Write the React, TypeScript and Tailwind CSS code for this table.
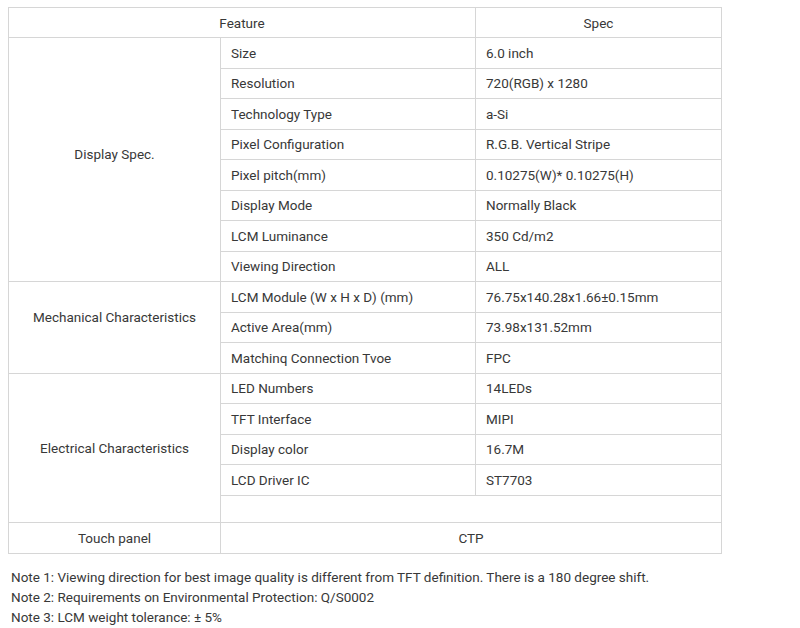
const displayRows = [
  ['Size', '6.0 inch'],
  ['Resolution', '720(RGB) x 1280'],
  ['Technology Type', 'a-Si'],
  ['Pixel Configuration', 'R.G.B. Vertical Stripe'],
  ['Pixel pitch(mm)', '0.10275(W)* 0.10275(H)'],
  ['Display Mode', 'Normally Black'],
  ['LCM Luminance', '350 Cd/m2'],
  ['Viewing Direction', 'ALL'],
];

const mechanicalRows = [
  ['LCM Module (W x H x D) (mm)', '76.75x140.28x1.66±0.15mm'],
  ['Active Area(mm)', '73.98x131.52mm'],
  ['Matchinq Connection Tvoe', 'FPC'],
];

const electricalRows = [
  ['LED Numbers', '14LEDs'],
  ['TFT Interface', 'MIPI'],
  ['Display color', '16.7M'],
  ['LCD Driver IC', 'ST7703'],
];

const cell = 'border border-[#d6d6d6] px-[10px] py-0 text-left font-normal';
const group = 'border border-[#d6d6d6] px-[10px] text-center align-middle font-normal';

function Group({ label, rows, pad, extra }: { label: string; rows: string[][]; pad: string; extra?: boolean }) {
  return (
    <>
      {rows.map((r, i) => (
        <tr key={r[0]} className="h-[30.5px]">
          {i === 0 && (
            <td rowSpan={rows.length + (extra ? 1 : 0)} className={`${group} ${pad}`}>
              {label}
            </td>
          )}
          <td className={cell}>{r[0]}</td>
          <td className={cell}>{r[1]}</td>
        </tr>
      ))}
      {extra && (
        <tr className="h-[27px]">
          <td colSpan={2} className={cell}></td>
        </tr>
      )}
    </>
  );
}

export default function App() {
  return (
    <div className="w-[800px] h-[628px] bg-white pt-[7px] text-[13.5px] leading-[20px] text-[#383838]" style={{ fontFamily: 'Roboto, "Liberation Sans", sans-serif' }}>
      <table className="ml-[8px] w-[713px] border-collapse table-fixed">
        <colgroup>
          <col className="w-[212px]" />
          <col className="w-[255px]" />
          <col className="w-[246px]" />
        </colgroup>
        <tbody>
          <tr className="h-[30px]">
            <td colSpan={2} className={`${group}`}>Feature</td>
            <td className={`${group}`}>Spec</td>
          </tr>
          <Group label="Display Spec." rows={displayRows} pad="pb-[12px]" />
          <Group label="Mechanical Characteristics" rows={mechanicalRows} pad="pb-[20px]" />
          <Group label="Electrical Characteristics" rows={electricalRows} pad="pt-0" extra />
          <tr className="h-[31px]">
            <td className={group}>Touch panel</td>
            <td colSpan={2} className={group}>CTP</td>
          </tr>
        </tbody>
      </table>
      <div className="mt-[13px] pl-[11px]">
        <p>Note 1: Viewing direction for best image quality is different from TFT definition. There is a 180 degree shift.</p>
        <p>Note 2: Requirements on Environmental Protection: Q/S0002</p>
        <p>Note 3: LCM weight tolerance: ± 5%</p>
      </div>
    </div>
  );
}
